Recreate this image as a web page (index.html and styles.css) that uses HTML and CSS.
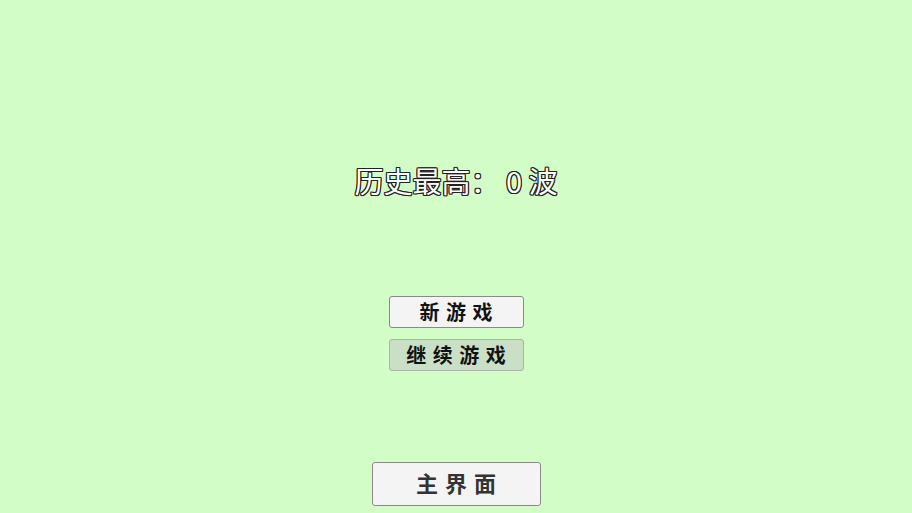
FILE: index.html
```html
<!DOCTYPE html>
<html lang="zh-CN">
<head>
    <meta charset="UTF-8">
    <meta name="viewport" content="width=device-width, initial-scale=1.0">
    <title>开始</title>
    <link rel="stylesheet" href="styles.css">
</head>
<body>
    <div class="screen">
        <h1 class="record">历史最高： 0 波</h1>
        <div class="menu">
            <button class="btn">新 游 戏</button>
            <button class="btn btn-continue">继 续 游 戏</button>
        </div>
        <button class="btn btn-home">主 界 面</button>
    </div>
</body>
</html>
```

FILE: styles.css
```css
body {
    margin: 0;
    background-color: #d3fdc6;
    font-family: "Noto Sans CJK SC", "Noto Sans", sans-serif;
}
.screen {
    height: 513px;
    display: flex;
    flex-direction: column;
    align-items: center;
}
.record {
    margin: 159px 0 0;
    font-size: 29px;
    font-weight: normal;
    line-height: 42px;
    color: #fff;
    text-shadow: -1px -1px 0 #222, 1px -1px 0 #222, -1px 1px 0 #222, 1px 1px 0 #222,
        0 -1px 0 #222, 0 1px 0 #222, -1px 0 0 #222, 1px 0 0 #222;
}
.menu {
    margin-top: 95px;
    display: flex;
    flex-direction: column;
    gap: 11px;
}
.btn {
    width: 135px;
    height: 32px;
    padding: 0 0 3px 1px;
    font-family: inherit;
    font-size: 20px;
    font-weight: bold;
    letter-spacing: 1px;
    color: #111;
    background-color: #f4f4f4;
    border: 1px solid #8a8a8a;
    border-radius: 3px;
}
.btn-continue {
    background-color: #c9dfc6;
    border-color: #a6b4a4;
}
.btn-home {
    margin-top: auto;
    margin-bottom: 7px;
    padding-bottom: 4px;
    width: 169px;
    height: 44px;
    font-size: 22px;
    letter-spacing: 1px;
    color: #333;
}
```
